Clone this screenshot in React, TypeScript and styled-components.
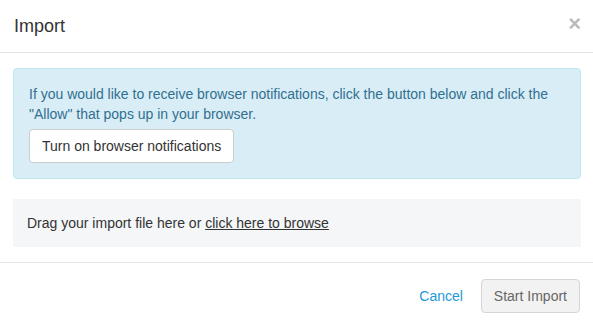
import styled, { createGlobalStyle } from "styled-components"

const GlobalStyle = createGlobalStyle`
  html, body {
    margin: 0;
    padding: 0;
    background: #fff;
    overflow: hidden;
  }
  body {
    font-family: "Liberation Sans", Arial, Helvetica, sans-serif;
    font-size: 14px;
    line-height: 20px;
    color: #333;
  }
  * {
    box-sizing: border-box;
  }
`

const Modal = styled.div`
  width: 593px;
  height: 326px;
  display: flex;
  flex-direction: column;
  background: #fff;
  overflow: hidden;

  & > * {
    flex-shrink: 0;
  }
`

const Header = styled.div`
  display: flex;
  align-items: center;
  justify-content: space-between;
  height: 53px;
  padding: 0 12px 0 14px;
  border-bottom: 1px solid #e5e5e5;
`

const Title = styled.h4`
  margin: 0;
  font-size: 18px;
  font-weight: normal;
  line-height: 26px;
  color: #333;
  padding-bottom: 1px;
`

const Close = styled.button`
  border: none;
  background: transparent;
  padding: 0;
  margin: 0 0 5px;
  font-family: "Liberation Sans", Arial, sans-serif;
  font-size: 22px;
  font-weight: bold;
  line-height: 21px;
  color: #000;
  opacity: 0.27;
  cursor: pointer;
`

const Body = styled.div`
  padding: 15px 12px 15px 13px;
`

const Alert = styled.div`
  padding: 15px;
  margin-bottom: 20px;
  background: #d9edf7;
  border: 1px solid #bce8f1;
  border-radius: 4px;
  color: #31708f;

  p {
    margin: 0;
  }
`

const Button = styled.button<{ $muted?: boolean }>`
  display: inline-block;
  height: 34px;
  padding: 6px 12px;
  font-family: inherit;
  font-size: 14px;
  line-height: 20px;
  border-radius: 4px;
  border: 1px solid ${(p) => (p.$muted ? "#d6d6d6" : "#ccc")};
  background: ${(p) => (p.$muted ? "#f2f2f2" : "#fff")};
  color: ${(p) => (p.$muted ? "#666" : "#333")};
  cursor: ${(p) => (p.$muted ? "not-allowed" : "pointer")};
`

const NotifyButton = styled(Button)`
  margin-top: 5px;
`

const DropZone = styled.div`
  height: 48px;
  padding: 14px 14px;
  background: #f5f6f7;

  a {
    color: #333;
    text-decoration: underline;
  }
`

const Footer = styled.div`
  display: flex;
  justify-content: flex-end;
  align-items: center;
  gap: 6px;
  padding: 16px 13px 15px;
  border-top: 1px solid #e5e5e5;
`

const LinkButton = styled.a`
  padding: 6px 12px;
  color: #1d9ad6;
  text-decoration: none;
  cursor: pointer;
`

export default function App() {
  return (
    <>
      <GlobalStyle />
      <Modal>
        <Header>
          <Title>Import</Title>
          <Close type="button" aria-label="Close">×</Close>
        </Header>
        <Body>
          <Alert>
            <p>
              If you would like to receive browser notifications, click the button below and click the
              "Allow" that pops up in your browser.
            </p>
            <NotifyButton type="button">Turn on browser notifications</NotifyButton>
          </Alert>
          <DropZone>
            Drag your import file here or <a href="#">click here to browse</a>
          </DropZone>
        </Body>
        <Footer>
          <LinkButton>Cancel</LinkButton>
          <Button type="button" $muted disabled>
            Start Import
          </Button>
        </Footer>
      </Modal>
    </>
  )
}
